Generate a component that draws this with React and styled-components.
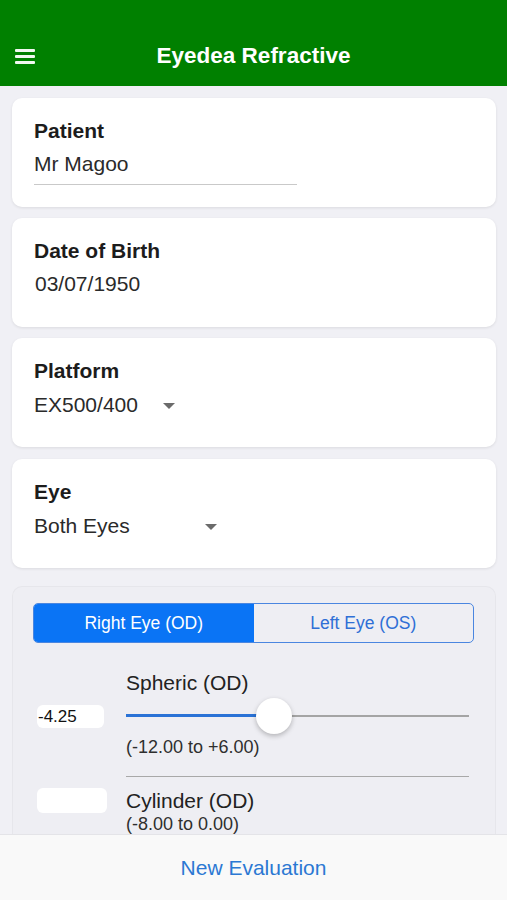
import React from 'react'
import styled, { createGlobalStyle } from 'styled-components'

const GlobalStyle = createGlobalStyle`
  html, body {
    margin: 0;
    padding: 0;
    background: #f0f0f5;
    font-family: "Liberation Sans", Arial, sans-serif;
    overflow: hidden;
  }
`

const Page = styled.div`
  height: 900px;
  display: flex;
  flex-direction: column;
`

const Header = styled.header`
  height: 86px;
  box-sizing: border-box;
  padding-top: 26px;
  background: rgb(0, 128, 0);
  position: relative;
  display: flex;
  align-items: center;
  justify-content: center;
`

const Menu = styled.div`
  position: absolute;
  left: 15px;
  top: 49px;
  width: 20px;
  display: flex;
  flex-direction: column;
  gap: 3.5px;

  span {
    height: 2.5px;
    background: #f1f8f1;
    border-radius: 1px;
  }
`

const Title = styled.h1`
  margin: 0;
  color: #ffffff;
  font-size: 22.5px;
  font-weight: bold;
  line-height: 60px;
`

const Content = styled.main`
  flex: 1;
  overflow: hidden;
  padding: 12px 11px 0 12px;
  display: flex;
  flex-direction: column;
`

const Card = styled.section`
  background: #ffffff;
  border-radius: 10px;
  box-shadow: 0 1px 3px rgba(0, 0, 0, 0.09);
  min-height: 109px;
  box-sizing: border-box;
  padding: 21px 22px 20px;
  margin-top: ${p => p.$gap || 0}px;
`

const Label = styled.div`
  font-size: 21px;
  font-weight: bold;
  color: #1c1c1c;
  line-height: 24px;
`

const Value = styled.div`
  margin-top: 9px;
  font-size: 21px;
  color: #2a2a2a;
  line-height: 24px;
  width: ${p => (p.$underline ? '263px' : 'auto')};
  padding-bottom: ${p => (p.$underline ? '8px' : '0')};
  border-bottom: ${p => (p.$underline ? '1px solid #c9c9c9' : 'none')};
  margin-left: ${p => p.$shift || 0}px;
`

const Select = styled.div`
  margin-top: 10px;
  display: flex;
  align-items: center;
  justify-content: space-between;
  width: ${p => p.$width}px;
  font-size: 21px;
  color: #2a2a2a;
  line-height: 24px;
`

const Caret = styled.span`
  width: 0;
  height: 0;
  border-left: 6px solid transparent;
  border-right: 6px solid transparent;
  border-top: 6px solid #6b6b6b;
  margin-top: 2px;
`

const Panel = styled.section`
  margin-top: 18px;
  background: #eeeef3;
  border: 1px solid #e6e6eb;
  border-bottom: none;
  border-radius: 10px 10px 0 0;
  padding: 16px 26px 0 20px;
  flex: 1;
`

const Segments = styled.div`
  display: flex;
  height: 40px;
  margin-right: -5px;
  border: 1.5px solid #4a86e0;
  border-radius: 5px;
  overflow: hidden;
  box-sizing: border-box;
`

const Segment = styled.div`
  flex: 1;
  display: flex;
  align-items: center;
  justify-content: center;
  font-size: 17.5px;
  background: ${p => (p.$active ? '#0a74f5' : 'transparent')};
  color: ${p => (p.$active ? '#ffffff' : '#2f6fd6')};
`

const Row = styled.div`
  display: grid;
  grid-template-columns: 93px 1fr;
  margin-top: ${p => p.$top}px;
`

const NumberBox = styled.div`
  margin-left: 4px;
  margin-top: ${p => p.$offset}px;
  width: ${p => p.$width}px;
  height: ${p => p.$height}px;
  background: #ffffff;
  border-radius: 6px;
  box-sizing: border-box;
  padding-left: 1px;
  font-size: 17px;
  line-height: ${p => p.$height}px;
  color: #111;
`

const Field = styled.div`
  border-bottom: ${p => (p.$divider ? '1.5px solid #a8a8a8' : 'none')};
  padding-bottom: ${p => (p.$divider ? '18px' : '0')};
`

const FieldName = styled.div`
  font-size: 21px;
  line-height: 24px;
  color: #222;
`

const Range = styled.div`
  font-size: 18px;
  line-height: 22px;
  color: #2e2e2e;
`

const Slider = styled.div`
  position: relative;
  height: 41px;
  display: flex;
  align-items: center;
`

const Track = styled.div`
  flex: 1;
  height: 2px;
  background: #a4a4a4;
  position: relative;
`

const Fill = styled.div`
  position: absolute;
  left: 0;
  top: -0.5px;
  height: 3px;
  background: #2a72d6;
`

const Thumb = styled.div`
  position: absolute;
  top: 50%;
  width: 36px;
  height: 36px;
  margin: -18px 0 0 -18px;
  border-radius: 50%;
  background: #ffffff;
  box-shadow: 0 2px 5px rgba(0, 0, 0, 0.25);
`

const Footer = styled.footer`
  height: 66px;
  background: #f9f9f9;
  border-top: 1px solid #e4e4e8;
  box-sizing: border-box;
  display: flex;
  align-items: center;
  justify-content: center;
  font-size: 21px;
  color: #2b78d3;
`

function RangeSlider({ percent }) {
  return (
    <Slider>
      <Track>
        <Fill style={{ width: `${percent}%` }} />
        <Thumb style={{ left: `${percent}%` }} />
      </Track>
    </Slider>
  )
}

export default function App() {
  const spheric = -4.25
  const percent = ((spheric + 12) / 18) * 100

  return (
    <Page>
      <GlobalStyle />
      <Header>
        <Menu>
          <span />
          <span />
          <span />
        </Menu>
        <Title>Eyedea Refractive</Title>
      </Header>

      <Content>
        <Card>
          <Label>Patient</Label>
          <Value $underline>Mr Magoo</Value>
        </Card>

        <Card $gap={11}>
          <Label>Date of Birth</Label>
          <Value $shift={1}>03/07/1950</Value>
        </Card>

        <Card $gap={11}>
          <Label>Platform</Label>
          <Select $width={141}>
            <span>EX500/400</span>
            <Caret />
          </Select>
        </Card>

        <Card $gap={12}>
          <Label>Eye</Label>
          <Select $width={183}>
            <span>Both Eyes</span>
            <Caret />
          </Select>
        </Card>

        <Panel>
          <Segments>
            <Segment $active>Right Eye (OD)</Segment>
            <Segment>Left Eye (OS)</Segment>
          </Segments>

          <Row $top={28}>
            <NumberBox $offset={34} $width={67} $height={23}>-4.25</NumberBox>
            <Field $divider>
              <FieldName>Spheric (OD)</FieldName>
              <RangeSlider percent={percent} />
              <Range>(-12.00 to +6.00)</Range>
            </Field>
          </Row>

          <Row $top={12}>
            <NumberBox $offset={-1} $width={70} $height={25} />
            <Field>
              <FieldName>Cylinder (OD)</FieldName>
              <Range>(-8.00 to 0.00)</Range>
            </Field>
          </Row>
        </Panel>
      </Content>

      <Footer>New Evaluation</Footer>
    </Page>
  )
}
